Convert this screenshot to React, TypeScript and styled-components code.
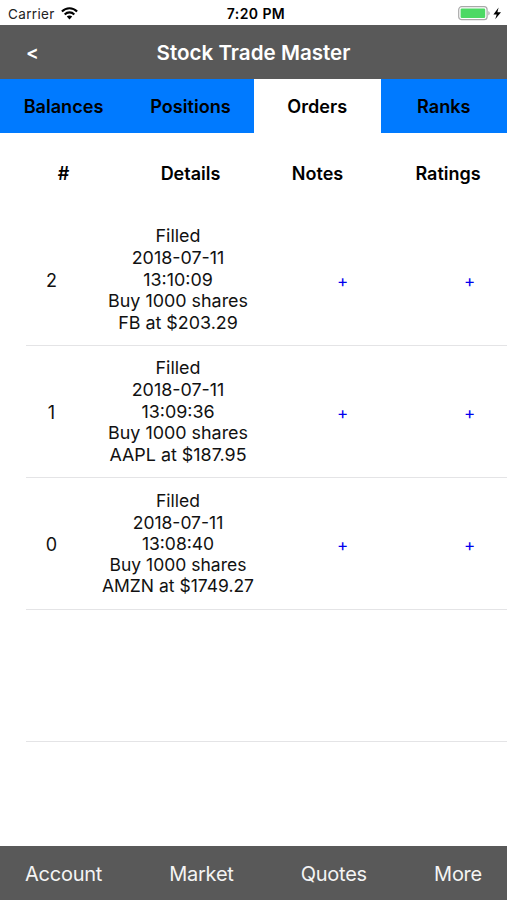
import React from "react";
import styled, { createGlobalStyle } from "styled-components";

const GlobalStyle = createGlobalStyle`
  * { box-sizing: border-box; }
  body { margin: 0; background: #fff; }
`;

const Screen = styled.div`
  display: flex;
  flex-direction: column;
  width: 507px;
  height: 900px;
  overflow: hidden;
  background: #fff;
  color: #000;
  font-family: Inter, "Liberation Sans", sans-serif;
  font-size: 18px;
`;

const StatusBar = styled.div`
  display: grid;
  grid-template-columns: 1fr auto 1fr;
  align-items: center;
  flex: none;
  height: 25px;
  padding: 2px 4px 0 8px;
  font-size: 13.5px;
  line-height: 22px;
`;

const Carrier = styled.span`
  display: flex;
  align-items: center;
  gap: 6px;
  letter-spacing: 0.35px;
  color: #222;
`;

const Clock = styled.span`
  padding: 1px 0 0 1px;
  font-size: 14px;
  font-weight: 600;
  letter-spacing: 0.4px;
`;

const Power = styled.span`
  display: flex;
  align-items: center;
  justify-content: flex-end;
  height: 100%;
`;

const Header = styled.header`
  display: grid;
  grid-template-columns: 64px 1fr 64px;
  align-items: center;
  flex: none;
  height: 54px;
  background: #595959;
  color: #fff;
  text-align: center;
`;

const BackButton = styled.button`
  padding: 2px 0 0 1px;
  border: 0;
  background: none;
  color: #fff;
  font: 600 19px/24px Inter, sans-serif;
`;

const Title = styled.h1`
  margin: 0;
  padding-top: 1px;
  font-size: 20.6px;
  font-weight: 600;
  line-height: 26px;
`;

const Tabs = styled.nav`
  display: grid;
  grid-template-columns: 127px 127px 126.5px 126.5px;
  flex: none;
  height: 54px;
  background: #fff;
`;

const Tab = styled.button<{ $active?: boolean }>`
  height: 54px;
  padding: 0;
  border: 0;
  background: ${(p) => (p.$active ? "#fff" : "#007aff")};
  color: #000;
  font: 600 18.1px/24px Inter, sans-serif;
`;

const ColumnHeads = styled.div`
  display: grid;
  grid-template-columns: 127px 127px 127px 126px;
  align-items: center;
  flex: none;
  height: 81px;
  text-align: center;
  font-weight: 600;
`;

const ColumnHead = styled.span<{ $shift?: number }>`
  padding-left: ${(p) => p.$shift ?? 0}px;
`;

const Orders = styled.main`
  flex: 1;
  padding-left: 26px;
`;

const OrderRow = styled.div`
  display: grid;
  grid-template-columns: 51px 202px 127px 127px;
  align-items: center;
  height: 132px;
  border-bottom: 1px solid #e4e4e6;
  text-align: center;
  color: #111;
`;

const OrderNumber = styled.span`
  padding-top: 1px;
`;

const Details = styled.div<{ $tight?: boolean }>`
  font-size: ${(p) => (p.$tight ? 17.5 : 17.9)}px;
  line-height: ${(p) => (p.$tight ? 21.2 : 21.8)}px;
  white-space: pre-line;
`;

const AddButton = styled.button`
  padding: 2px 0 0;
  border: 0;
  background: none;
  color: #0000ee;
  font: 400 17px/20px Inter, sans-serif;
`;

const BottomBar = styled.footer`
  display: flex;
  align-items: center;
  justify-content: space-between;
  flex: none;
  height: 54px;
  padding: 1px 25px 0;
  background: #595959;
  color: #f4f4f4;
  font-size: 20px;
  letter-spacing: -0.25px;
`;

const orders = [
  { id: 2, text: "Filled\n2018-07-11\n13:10:09\nBuy 1000 shares\nFB at $203.29" },
  { id: 1, text: "Filled\n2018-07-11\n13:09:36\nBuy 1000 shares\nAAPL at $187.95" },
  { id: 0, text: "Filled\n2018-07-11\n13:08:40\nBuy 1000 shares\nAMZN at $1749.27", tight: true },
];

const WifiIcon = () => (
  <svg width="17" height="13" viewBox="0 0 17 13" fill="none" stroke="#000" strokeWidth="2.1">
    <path d="M0.9 4.5C5.2 0.1 11.8 0.1 16.1 4.5" />
    <path d="M3.7 7.4C6.4 4.7 10.6 4.7 13.3 7.4" />
    <path d="M8.5 12.4L5.8 9.6C7.3 8.2 9.7 8.2 11.2 9.6Z" fill="#000" stroke="none" />
  </svg>
);

const BatteryIcon = () => (
  <svg width="45" height="16" viewBox="0 0 45 16">
    <rect x="0.7" y="0.7" width="28.4" height="13" rx="3" fill="#fff" stroke="#a9a9a9" strokeWidth="1.2" />
    <rect x="2.6" y="2.5" width="24.6" height="9.4" rx="1.2" fill="#4cd964" />
    <path d="M30.4 5C32.1 5.7 32.1 8.7 30.4 9.4Z" fill="#a9a9a9" />
    <path d="M40.6 1.6L35.4 8.4H38.7L37.2 13.2L43 6.3H39.4Z" fill="#000" />
  </svg>
);

export default function App() {
  return (
    <Screen>
      <GlobalStyle />
      <StatusBar>
        <Carrier>
          Carrier
          <WifiIcon />
        </Carrier>
        <Clock>7:20 PM</Clock>
        <Power>
          <BatteryIcon />
        </Power>
      </StatusBar>
      <Header>
        <BackButton>&lt;</BackButton>
        <Title>Stock Trade Master</Title>
      </Header>
      <Tabs>
        <Tab>Balances</Tab>
        <Tab>Positions</Tab>
        <Tab $active>Orders</Tab>
        <Tab>Ranks</Tab>
      </Tabs>
      <ColumnHeads>
        <ColumnHead>#</ColumnHead>
        <ColumnHead>Details</ColumnHead>
        <ColumnHead>Notes</ColumnHead>
        <ColumnHead $shift={8}>Ratings</ColumnHead>
      </ColumnHeads>
      <Orders>
        {orders.map((order) => (
          <OrderRow key={order.id}>
            <OrderNumber>{order.id}</OrderNumber>
            <Details $tight={order.tight}>{order.text}</Details>
            <AddButton>+</AddButton>
            <AddButton>+</AddButton>
          </OrderRow>
        ))}
        <OrderRow />
      </Orders>
      <BottomBar>
        <span>Account</span>
        <span>Market</span>
        <span>Quotes</span>
        <span>More</span>
      </BottomBar>
    </Screen>
  );
}
